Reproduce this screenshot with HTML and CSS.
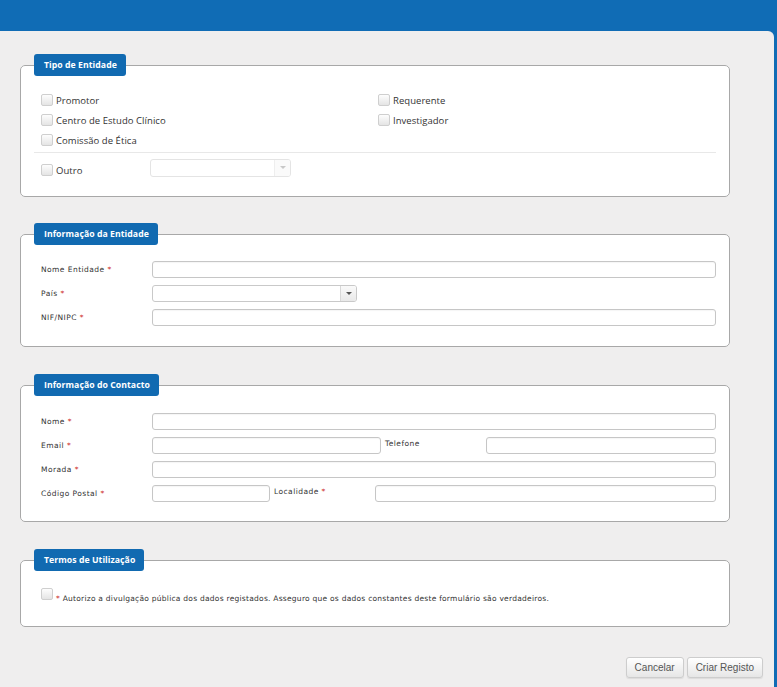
FILE: index.html
```html
<!DOCTYPE html>
<html lang="pt">
<head>
<meta charset="utf-8">
<title>Registo de Entidade</title>
<link rel="stylesheet" href="styles.css">
</head>
<body>
<div class="page">
  <fieldset class="box box-tipo">
    <legend>Tipo de Entidade</legend>
    <div class="inner">
      <div class="checks">
        <label class="chk"><input type="checkbox" class="cb"><span>Promotor</span></label>
        <label class="chk"><input type="checkbox" class="cb"><span>Requerente</span></label>
        <label class="chk"><input type="checkbox" class="cb"><span>Centro de Estudo Clínico</span></label>
        <label class="chk"><input type="checkbox" class="cb"><span>Investigador</span></label>
        <label class="chk"><input type="checkbox" class="cb"><span>Comissão de Ética</span></label>
      </div>
      <div class="sep"></div>
      <div class="outro-row">
        <label class="chk outro"><input type="checkbox" class="cb"><span>Outro</span></label>
        <div class="select disabled w141"><span class="arrow"></span></div>
      </div>
    </div>
  </fieldset>

  <fieldset class="box box-ent">
    <legend>Informação da Entidade</legend>
    <div class="inner rows">
      <div class="row"><span class="lbl">Nome Entidade <b>*</b></span><span class="input grow"></span></div>
      <div class="row"><span class="lbl">País <b>*</b></span><div class="select w205"><span class="arrow"></span></div></div>
      <div class="row"><span class="lbl">NIF/NIPC <b>*</b></span><span class="input grow"></span></div>
    </div>
  </fieldset>

  <fieldset class="box box-cont">
    <legend>Informação do Contacto</legend>
    <div class="inner rows">
      <div class="row"><span class="lbl">Nome <b>*</b></span><span class="input grow"></span></div>
      <div class="row"><span class="lbl">Email <b>*</b></span><span class="input w229"></span><span class="lbl2">Telefone</span><span class="input grow"></span></div>
      <div class="row"><span class="lbl">Morada <b>*</b></span><span class="input grow"></span></div>
      <div class="row"><span class="lbl">Código Postal <b>*</b></span><span class="input w118"></span><span class="lbl2">Localidade <b>*</b></span><span class="input grow"></span></div>
    </div>
  </fieldset>

  <fieldset class="box box-terms">
    <legend>Termos de Utilização</legend>
    <div class="inner">
      <label class="terms"><input type="checkbox" class="cb"><span><b>*</b> Autorizo a divulgação pública dos dados registados. Asseguro que os dados constantes deste formulário são verdadeiros.</span></label>
    </div>
  </fieldset>

  <div class="actions">
    <button class="btn" type="button">Cancelar</button>
    <button class="btn" type="button">Criar Registo</button>
  </div>
</div>
</body>
</html>
```

FILE: styles.css
```css
html, body {
  margin: 0;
  padding: 0;
}
body {
  background: #106cb5;
  font-family: "DejaVu Sans", Verdana, sans-serif;
  color: #333;
}
.page {
  box-sizing: border-box;
  margin: 31px 3px 0 0;
  min-height: calc(100vh - 31px);
  background: #efeeee;
  border-top-right-radius: 6px;
  padding: 23px 44px 10px 20px;
}
.box {
  margin: 0 0 27px 0;
  padding: 0 13px;
  border: 1px solid #a8a8a8;
  border-radius: 5px;
  background: #fff;
  min-width: 0;
}
.box.box-tipo {
  margin-bottom: 26px;
}
.box legend {
  background: #116ab1;
  color: #fff;
  font-family: "Open Sans", sans-serif;
  font-weight: 700;
  font-size: 8.7px;
  letter-spacing: 0.05px;
  height: 22px;
  line-height: 22px;
  padding: 0 9px 0 10px;
  border-radius: 3px;
  box-sizing: border-box;
}
.inner {
  padding-left: 7px;
}
.box-tipo .inner {
  padding-top: 14px;
  padding-bottom: 19px;
}
.checks {
  display: grid;
  grid-template-columns: 337px 1fr;
  grid-auto-rows: 20px;
}
.chk {
  display: flex;
  align-items: center;
  font-family: "Open Sans", sans-serif;
  font-size: 9.5px;
  letter-spacing: 0.05px;
  color: #333;
}
.chk span {
  padding-top: 1px;
}
.cb {
  appearance: none;
  -webkit-appearance: none;
  margin: 0 3px 0 0;
  width: 12px;
  height: 12px;
  border: 1px solid #cfcfcf;
  border-radius: 2px;
  background: linear-gradient(#fdfdfd, #e4e4e4);
  box-sizing: border-box;
  flex: none;
}
.sep {
  margin: 2px 0 6px -7px;
  height: 1px;
  background: #e8e8e8;
}
.outro-row {
  display: flex;
  align-items: center;
  height: 18px;
}
.outro {
  width: 109px;
  padding-top: 4px;
}
.select {
  position: relative;
  box-sizing: border-box;
  height: 17px;
  border: 1px solid #c9c9c9;
  border-radius: 3px;
  background: #fff;
}
.select .arrow {
  position: absolute;
  top: 0;
  right: 0;
  bottom: 0;
  width: 15px;
  border-left: 1px solid #d8d8d8;
  background: linear-gradient(#fafafa, #e9e9e9);
  border-radius: 0 2px 2px 0;
}
.select .arrow::after {
  content: "";
  position: absolute;
  left: 5px;
  top: 6px;
  border-left: 3px solid transparent;
  border-right: 3px solid transparent;
  border-top: 3px solid #555;
}
.select.disabled {
  height: 18px;
  border-color: #e4e4e4;
}
.select.disabled .arrow {
  border-left-color: #eeeeee;
  background: #fafafa;
}
.select.disabled .arrow::after {
  border-top-color: #c8c8c8;
}
.w141 { width: 141px; }
.w205 { width: 205px; }
.w229 { width: 229px; }
.w118 { width: 118px; }

.rows {
  display: flex;
  flex-direction: column;
  gap: 7px;
  padding-top: 16px;
  padding-bottom: 20px;
}
.box-cont .rows {
  padding-top: 17px;
  padding-bottom: 19px;
}
.row {
  display: flex;
  align-items: center;
  height: 17px;
}
.lbl {
  width: 111px;
  flex: none;
  font-size: 7.5px;
  letter-spacing: 0.45px;
  color: #333;
}
.lbl b, .lbl2 b, .terms b {
  color: #cc1f1f;
  font-weight: normal;
}
.lbl2 {
  width: 101px;
  margin-left: 4px;
  flex: none;
  font-size: 7.5px;
  letter-spacing: 0.45px;
  color: #333;
  align-self: flex-start;
  padding-top: 2px;
}
.input {
  box-sizing: border-box;
  height: 17px;
  border: 1px solid #c6c6c6;
  border-radius: 3px;
  background: #fff;
  box-shadow: inset 0 1px 1px rgba(0,0,0,0.04);
  flex: none;
}
.input.grow {
  flex: 1;
}
.box-terms .inner {
  padding-top: 15px;
  padding-bottom: 24px;
}
.terms {
  display: flex;
  align-items: flex-start;
  font-size: 7.5px;
  letter-spacing: 0.25px;
  color: #333;
  height: 16px;
}
.terms .cb {
  margin-top: 2px;
}
.terms span {
  padding-top: 8px;
}
.actions {
  display: flex;
  justify-content: flex-end;
  gap: 3px;
  margin-top: 30px;
  margin-right: -33px;
}
.btn {
  height: 21px;
  box-sizing: border-box;
  padding: 0 8px;
  border: 1px solid #cdcdcd;
  border-radius: 3px;
  background: linear-gradient(#ffffff, #e6e6e6);
  box-shadow: 0 1px 1px rgba(0,0,0,0.08);
  font-family: "Liberation Sans", Arial, sans-serif;
  font-size: 10px;
  color: #555;
}
```
